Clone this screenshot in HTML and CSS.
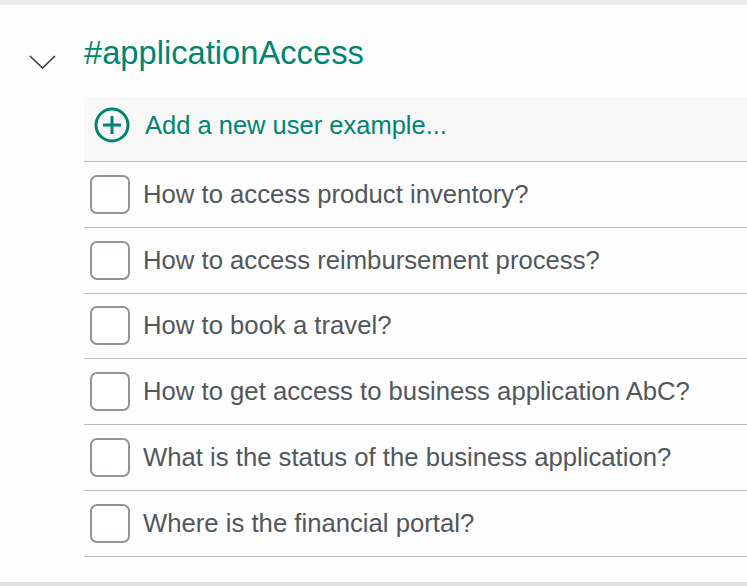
FILE: index.html
```html
<!DOCTYPE html>
<html lang="en">
<head>
<meta charset="utf-8">
<title>#applicationAccess</title>
<link rel="stylesheet" href="styles.css">
</head>
<body>
<div class="topbar"></div>
<main class="section">
  <header class="section-header">
    <div class="toggle">
      <svg class="chevron" width="27" height="14" viewBox="0 0 27 14" aria-hidden="true">
        <polyline points="1,1 13.5,13 26,1" fill="none" stroke="#3a3a3a" stroke-width="1.6"/>
      </svg>
    </div>
    <h1 class="title">#applicationAccess</h1>
  </header>
  <div class="examples">
    <div class="add-row">
      <svg class="plus" width="36" height="36" viewBox="0 0 36 36" aria-hidden="true">
        <circle cx="18" cy="18" r="16" fill="none" stroke="#008571" stroke-width="3"/>
        <line x1="18" y1="9" x2="18" y2="27" stroke="#008571" stroke-width="3"/>
        <line x1="9" y1="18" x2="27" y2="18" stroke="#008571" stroke-width="3"/>
      </svg>
      <span class="add-text">Add a new user example...</span>
    </div>
    <ul class="list">
      <li class="item"><span class="check"></span><span class="label">How to access product inventory?</span></li>
      <li class="item"><span class="check"></span><span class="label">How to access reimbursement process?</span></li>
      <li class="item"><span class="check"></span><span class="label">How to book a travel?</span></li>
      <li class="item"><span class="check"></span><span class="label">How to get access to business application AbC?</span></li>
      <li class="item"><span class="check"></span><span class="label">What is the status of the business application?</span></li>
      <li class="item"><span class="check"></span><span class="label">Where is the financial portal?</span></li>
    </ul>
  </div>
</main>
<div class="bottombar"></div>
</body>
</html>
```
FILE: styles.css
```css
html, body {
  margin: 0;
  padding: 0;
  height: 100%;
}
body {
  display: flex;
  flex-direction: column;
  background: #fdfdfd;
  font-family: "Liberation Sans", Arial, Helvetica, sans-serif;
  overflow: hidden;
}
.topbar {
  height: 5px;
  background: #ebebeb;
  flex: none;
}
.section {
  flex: 1;
}
.section-header {
  display: flex;
  align-items: flex-start;
  padding-top: 28px;
  padding-bottom: 24px;
}
.toggle {
  width: 84px;
  flex: none;
}
.chevron {
  display: block;
  margin-left: 29px;
  margin-top: 22px;
}
.title {
  margin: 0;
  font-size: 32.7px;
  line-height: 40px;
  font-weight: normal;
  color: #008571;
}
.examples {
  margin-left: 84px;
}
.add-row {
  display: flex;
  align-items: center;
  height: 65px;
  box-sizing: border-box;
  padding: 0 0 8px 10px;
  background: #f8f8f8;
  border-bottom: 1px solid #aebab8;
}
.plus {
  display: block;
  flex: none;
}
.add-text {
  margin-left: 15px;
  font-size: 25.5px;
  color: #008571;
}
.list {
  list-style: none;
  margin: 0;
  padding: 0;
}
.item {
  display: flex;
  align-items: center;
  height: 65.75px;
  box-sizing: border-box;
  padding-left: 6px;
  border-bottom: 1px solid #b6c0be;
}
.check {
  width: 40px;
  height: 39px;
  box-sizing: border-box;
  border: 2px solid #8b9795;
  border-radius: 7px;
  background: #fff;
  flex: none;
}
.label {
  margin-left: 13px;
  font-size: 25.7px;
  color: #51575a;
}
.bottombar {
  height: 4px;
  background: #e2e2e2;
  flex: none;
}
```
